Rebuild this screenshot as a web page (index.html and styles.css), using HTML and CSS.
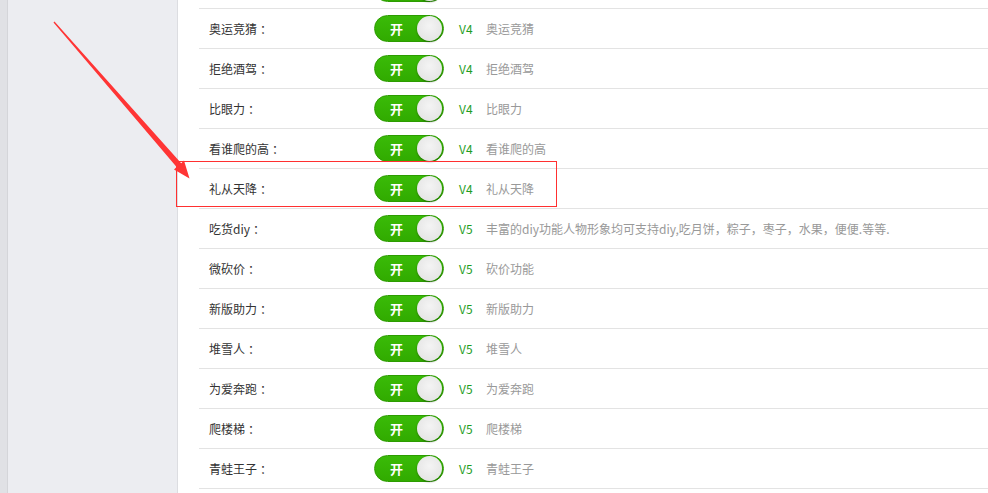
FILE: index.html
```html
<!DOCTYPE html>
<html lang="zh-CN">
<head>
<meta charset="utf-8">
<title>活动开关</title>
<link rel="stylesheet" href="styles.css">
</head>
<body>
<div class="page">
  <div class="rail"></div>
  <aside class="sidebar"></aside>
  <main class="main">
    <ul class="list">
      <li class="row row-hidden"><span class="label"></span><span class="switch"><span class="knob"></span></span></li>
      <li class="row"><span class="label">奥运竞猜<span class="colon">：</span></span><span class="switch"><span class="switch-text">开</span><span class="knob"></span></span><span class="ver">V4</span><span class="desc">奥运竞猜</span></li>
      <li class="row"><span class="label">拒绝酒驾<span class="colon">：</span></span><span class="switch"><span class="switch-text">开</span><span class="knob"></span></span><span class="ver">V4</span><span class="desc">拒绝酒驾</span></li>
      <li class="row"><span class="label">比眼力<span class="colon">：</span></span><span class="switch"><span class="switch-text">开</span><span class="knob"></span></span><span class="ver">V4</span><span class="desc">比眼力</span></li>
      <li class="row"><span class="label">看谁爬的高<span class="colon">：</span></span><span class="switch"><span class="switch-text">开</span><span class="knob"></span></span><span class="ver">V4</span><span class="desc">看谁爬的高</span></li>
      <li class="row"><span class="label">礼从天降<span class="colon">：</span></span><span class="switch"><span class="switch-text">开</span><span class="knob"></span></span><span class="ver">V4</span><span class="desc">礼从天降</span></li>
      <li class="row"><span class="label">吃货diy<span class="colon">：</span></span><span class="switch"><span class="switch-text">开</span><span class="knob"></span></span><span class="ver">V5</span><span class="desc">丰富的diy功能人物形象均可支持diy,吃月饼，粽子，枣子，水果，便便.等等.</span></li>
      <li class="row"><span class="label">微砍价<span class="colon">：</span></span><span class="switch"><span class="switch-text">开</span><span class="knob"></span></span><span class="ver">V5</span><span class="desc">砍价功能</span></li>
      <li class="row"><span class="label">新版助力<span class="colon">：</span></span><span class="switch"><span class="switch-text">开</span><span class="knob"></span></span><span class="ver">V5</span><span class="desc">新版助力</span></li>
      <li class="row"><span class="label">堆雪人<span class="colon">：</span></span><span class="switch"><span class="switch-text">开</span><span class="knob"></span></span><span class="ver">V5</span><span class="desc">堆雪人</span></li>
      <li class="row"><span class="label">为爱奔跑<span class="colon">：</span></span><span class="switch"><span class="switch-text">开</span><span class="knob"></span></span><span class="ver">V5</span><span class="desc">为爱奔跑</span></li>
      <li class="row"><span class="label">爬楼梯<span class="colon">：</span></span><span class="switch"><span class="switch-text">开</span><span class="knob"></span></span><span class="ver">V5</span><span class="desc">爬楼梯</span></li>
      <li class="row"><span class="label">青蛙王子<span class="colon">：</span></span><span class="switch"><span class="switch-text">开</span><span class="knob"></span></span><span class="ver">V5</span><span class="desc">青蛙王子</span></li>
    </ul>
  </main>
  <div class="highlight"></div>
  <svg class="arrow" width="988" height="493" viewBox="0 0 988 493">
    <polygon fill="#ff3535" points="54.5,21.5 181.2,163.2 184,160.6 189.5,178.5 174,169.4 176.6,167 53.5,22.5"/>
  </svg>
</div>
</body>
</html>
```

FILE: styles.css
```css
* {
  box-sizing: border-box;
}

html, body {
  margin: 0;
  padding: 0;
}

body {
  font-family: "Noto Sans CJK SC", "Liberation Sans", sans-serif;
  font-size: 12px;
  color: #333;
  background: #fff;
}

.page {
  position: relative;
  display: flex;
  width: 988px;
  height: 493px;
  overflow: hidden;
}

.rail {
  flex: 0 0 8px;
  background: #e0e1e5;
  border-right: 1px solid #d4d5d9;
}

.sidebar {
  flex: 0 0 170px;
  background: #ecedf1;
  border-right: 1px solid #dcdde1;
}

.main {
  flex: 1;
  background: #fff;
  padding-left: 21px;
}

.list {
  list-style: none;
  margin: -31px 0 0 0;
  padding: 0;
}

.row {
  display: flex;
  align-items: center;
  height: 40px;
  padding-left: 10px;
  border-bottom: 1px solid #e3e3e3;
}

.label {
  flex: 0 0 165px;
  color: #333;
}

.colon {
  padding-left: 3px;
}

.switch {
  display: flex;
  align-items: center;
  flex: 0 0 70px;
  height: 27px;
  padding: 0 1px 0 15px;
  border: 1px solid #2c9c00;
  border-radius: 14px;
  background: linear-gradient(#3abb08, #31ab00);
}

.switch-text {
  color: #fff;
  font-weight: bold;
  font-size: 13px;
  line-height: 1;
}

.knob {
  margin-left: auto;
  width: 25px;
  height: 25px;
  border-radius: 50%;
  background: radial-gradient(circle at 50% 40%, #f4f4f4 0%, #e6e6e6 70%, #d8d8d8 100%);
  box-shadow: 0 1px 2px rgba(0, 0, 0, 0.35);
}

.ver {
  flex: 0 0 27px;
  margin-left: 15px;
  color: #1f9e1f;
  font-size: 12px;
}

.desc {
  color: #999;
  white-space: nowrap;
}

.highlight {
  position: absolute;
  left: 176px;
  top: 161px;
  width: 381px;
  height: 46px;
  border: 1px solid #ff3030;
  pointer-events: none;
}

.arrow {
  position: absolute;
  left: 0;
  top: 0;
  pointer-events: none;
}
```
